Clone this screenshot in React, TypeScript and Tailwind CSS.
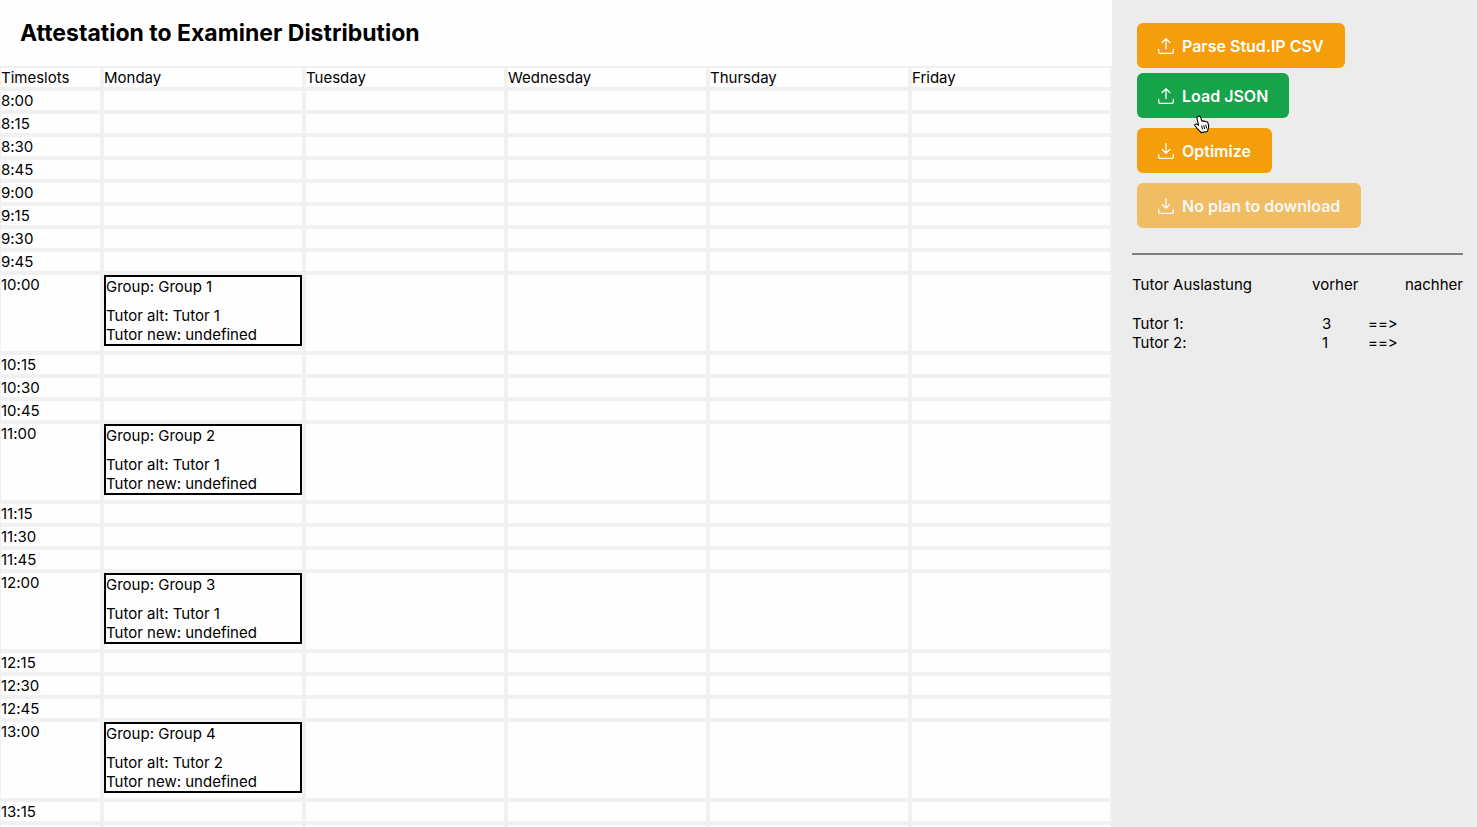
import type { ReactNode } from "react";

const days = ["Monday", "Tuesday", "Wednesday", "Thursday", "Friday"];

const times = [
  "8:00", "8:15", "8:30", "8:45",
  "9:00", "9:15", "9:30", "9:45",
  "10:00", "10:15", "10:30", "10:45",
  "11:00", "11:15", "11:30", "11:45",
  "12:00", "12:15", "12:30", "12:45",
  "13:00", "13:15",
];

type Session = { group: string; tutorOld: string; tutorNew: string };

const sessions: Record<string, Session> = {
  "Monday 10:00": { group: "Group 1", tutorOld: "Tutor 1", tutorNew: "undefined" },
  "Monday 11:00": { group: "Group 2", tutorOld: "Tutor 1", tutorNew: "undefined" },
  "Monday 12:00": { group: "Group 3", tutorOld: "Tutor 1", tutorNew: "undefined" },
  "Monday 13:00": { group: "Group 4", tutorOld: "Tutor 2", tutorNew: "undefined" },
};

const load = [
  { tutor: "Tutor 1:", before: 3 },
  { tutor: "Tutor 2:", before: 1 },
];

function UploadIcon() {
  return (
    <svg className="size-4" viewBox="0 0 16 16" fill="none" stroke="currentColor" strokeWidth="1.3" strokeLinecap="round" strokeLinejoin="round" aria-hidden="true">
      <path d="M8 10.500V0.800M4.200 4.500 8 0.700l3.800 3.800" />
      <path d="M0.700 11.500v2.500c0 .8.500 1.300 1.300 1.300h12c.8 0 1.300-.5 1.300-1.300v-2.500" />
    </svg>
  );
}

function DownloadIcon() {
  return (
    <svg className="size-4" viewBox="0 0 16 16" fill="none" stroke="currentColor" strokeWidth="1.3" strokeLinecap="round" strokeLinejoin="round" aria-hidden="true">
      <path d="M8 0.700v9.600M4.200 6.500 8 10.300l3.800-3.800" />
      <path d="M0.700 11.500v2.500c0 .8.500 1.300 1.300 1.300h12c.8 0 1.300-.5 1.300-1.300v-2.500" />
    </svg>
  );
}

function ActionButton({ icon, color, disabled, children }: { icon: ReactNode; color: string; disabled?: boolean; children: ReactNode }) {
  return (
    <button
      type="button"
      disabled={disabled}
      className={`flex h-[45px] items-center gap-2 rounded-md border border-transparent px-5 text-base font-semibold text-white disabled:opacity-60 ${color}`}
    >
      {icon}
      {children}
    </button>
  );
}

function SessionCard({ group, tutorOld, tutorNew }: Session) {
  return (
    <div className="mb-[5px] border-2 border-black">
      <div className="mb-2.5">Group: {group}</div>
      <div>Tutor alt: {tutorOld}</div>
      <div>Tutor new: {tutorNew}</div>
    </div>
  );
}

function Schedule() {
  return (
    <table className="w-full table-fixed border-separate border-spacing-0 text-left">
      <thead>
        <tr>
          <th scope="col" className="w-[102px] border-2 border-l border-[#f1f1f1] p-0 font-normal">Timeslots</th>
          {days.map((day) => (
            <th key={day} scope="col" className="border-2 border-[#f1f1f1] p-0 font-normal">{day}</th>
          ))}
        </tr>
      </thead>
      <tbody>
        {times.map((time) => (
          <tr key={time}>
            <th scope="row" className="border-2 border-l border-[#f1f1f1] p-0 align-top font-normal">{time}</th>
            {days.map((day) => {
              const session = sessions[`${day} ${time}`];
              return (
                <td key={day} className="border-2 border-[#f1f1f1] p-0 align-top">
                  {session && <SessionCard {...session} />}
                </td>
              );
            })}
          </tr>
        ))}
      </tbody>
      <tfoot>
        <tr>
          <td className="h-[23px] border-2 border-l border-[#f1f1f1] p-0" />
          {days.map((day) => (
            <td key={day} className="border-2 border-[#f1f1f1] p-0" />
          ))}
        </tr>
      </tfoot>
    </table>
  );
}

function TutorLoad() {
  return (
    <table className="w-full table-fixed text-left">
      <thead>
        <tr>
          <th scope="col" className="w-[180px] p-0 pb-5 font-normal">Tutor Auslastung</th>
          <th scope="col" className="w-14 p-0 pb-5 font-normal">vorher</th>
          <th scope="col" className="p-0 pb-5 text-right font-normal">nachher</th>
        </tr>
      </thead>
      <tbody>
        {load.map(({ tutor, before }) => (
          <tr key={tutor}>
            <th scope="row" className="p-0 font-normal">{tutor}</th>
            <td className="p-0 pl-2.5">{before}</td>
            <td className="p-0">==&gt;</td>
          </tr>
        ))}
      </tbody>
    </table>
  );
}

function HandCursor() {
  return (
    <svg className="pointer-events-none absolute top-[115px] left-[82px] h-[19px] w-4" viewBox="0 0 16 19" aria-hidden="true">
      <path
        d="M4.600 1.200c.9-.3 1.700.2 2 1.100l1.300 3.900c.5-.5 1.500-.5 2 .2.600-.4 1.500-.3 1.900.4.900-.3 1.800.1 2.100 1.100l.6 2.100c.5 1.700.1 2.700-.4 3.900l-.6 2.600-6.500 1.100c-.8-1.500-2.100-2.200-3.200-3.400C2.700 13 1.700 11.500 1 10.800c-.7-1 .4-2.200 1.600-1.700l2 1.200L3 3.300c-.4-1 .6-1.800 1.600-2.100Z"
        fill="#fff" stroke="#000" strokeWidth="1.100" strokeLinejoin="round"
      />
      <path d="m7.600 10.600.9 3.800M9.700 10.200l.9 3.800M11.800 9.800l.8 3.700" stroke="#000" strokeWidth="1" fill="none" />
    </svg>
  );
}

export default function App() {
  return (
    <div className="flex h-screen overflow-hidden bg-[#fefefe] font-[Inter,sans-serif] text-[15px] leading-[19px] text-black [font-variant-ligatures:none]">
      <main className="min-w-0 flex-1">
        <h1 className="px-5 py-[18px] text-[23px] leading-[30px] font-bold">
          Attestation to Examiner Distribution
        </h1>
        <Schedule />
      </main>
      <aside className="relative w-[365px] shrink-0 bg-[#ececec] pt-[23px] pr-3.5 pl-5">
        <div className="flex flex-col items-start gap-2.5 pl-[5px]">
          <div className="flex flex-col items-start gap-[5px]">
            <ActionButton icon={<UploadIcon />} color="bg-[#f59e0b]">Parse Stud.IP CSV</ActionButton>
            <ActionButton icon={<UploadIcon />} color="bg-[#16a34a]">Load JSON</ActionButton>
          </div>
          <ActionButton icon={<DownloadIcon />} color="bg-[#f59e0b]">Optimize</ActionButton>
          <ActionButton icon={<DownloadIcon />} color="bg-[#f59e0b]" disabled>No plan to download</ActionButton>
        </div>
        <hr className="mt-[25px] mb-5 border-t-2 border-[#808080]" />
        <TutorLoad />
        <HandCursor />
      </aside>
    </div>
  );
}
